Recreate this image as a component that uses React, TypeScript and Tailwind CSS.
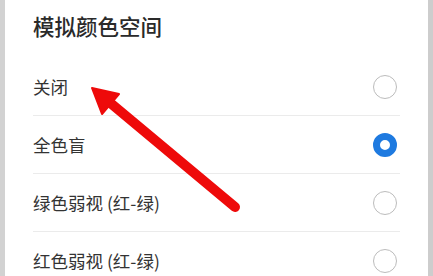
import React from "react";

const OPTIONS = [
  { label: "关闭", checked: false },
  { label: "全色盲", checked: true },
  { label: "绿色弱视 (红-绿)", checked: false },
  { label: "红色弱视 (红-绿)", checked: false },
];

function Radio({ checked }: { checked: boolean }) {
  if (checked) {
    return (
      <div className="w-[24px] h-[24px] rounded-full border-[7px] border-[#1e7ae0] bg-white flex-shrink-0" />
    );
  }
  return (
    <div className="w-[24px] h-[24px] rounded-full border-[1.5px] border-[#bcbcbc] bg-white flex-shrink-0" />
  );
}

function Arrow() {
  return (
    <svg
      className="absolute left-0 top-0 pointer-events-none"
      width={433}
      height={276}
      viewBox="0 0 433 276"
    >
      <line
        x1={108}
        y1={101}
        x2={235}
        y2={207}
        stroke="#ee0a0a"
        strokeWidth={10}
        strokeLinecap="round"
      />
      <polygon points="92,88 102,114 119,94" fill="#ee0a0a" stroke="#ee0a0a" strokeWidth={2} strokeLinejoin="round" />
    </svg>
  );
}

export default function App() {
  return (
    <div
      className="relative w-[433px] h-[276px] flex overflow-hidden bg-white"
      style={{ fontFamily: '"Noto Sans CJK SC", "Noto Sans", sans-serif' }}
    >
      <div className="w-[5px] bg-[#d2d2d2] flex-shrink-0" />
      <div className="flex-1 flex flex-col pl-[28px] pr-[28px]">
        <div className="h-[58px] flex-shrink-0 flex items-center pb-[6px]">
          <span className="text-[21.5px] font-medium text-[#2a2a2a] leading-none">模拟颜色空间</span>
        </div>
        {OPTIONS.map((o, i) => (
          <div key={i} className="flex-shrink-0">
            <div className="h-[57px] flex items-center justify-between pr-[3px]">
              <span className="text-[17.5px] text-[#333333] leading-none">{o.label}</span>
              <Radio checked={o.checked} />
            </div>
            {i < OPTIONS.length - 1 && <div className="h-px bg-[#ebebeb]" />}
          </div>
        ))}
      </div>
      <div className="w-[5px] bg-[#cdcdcd] flex-shrink-0" />
      <Arrow />
    </div>
  );
}
